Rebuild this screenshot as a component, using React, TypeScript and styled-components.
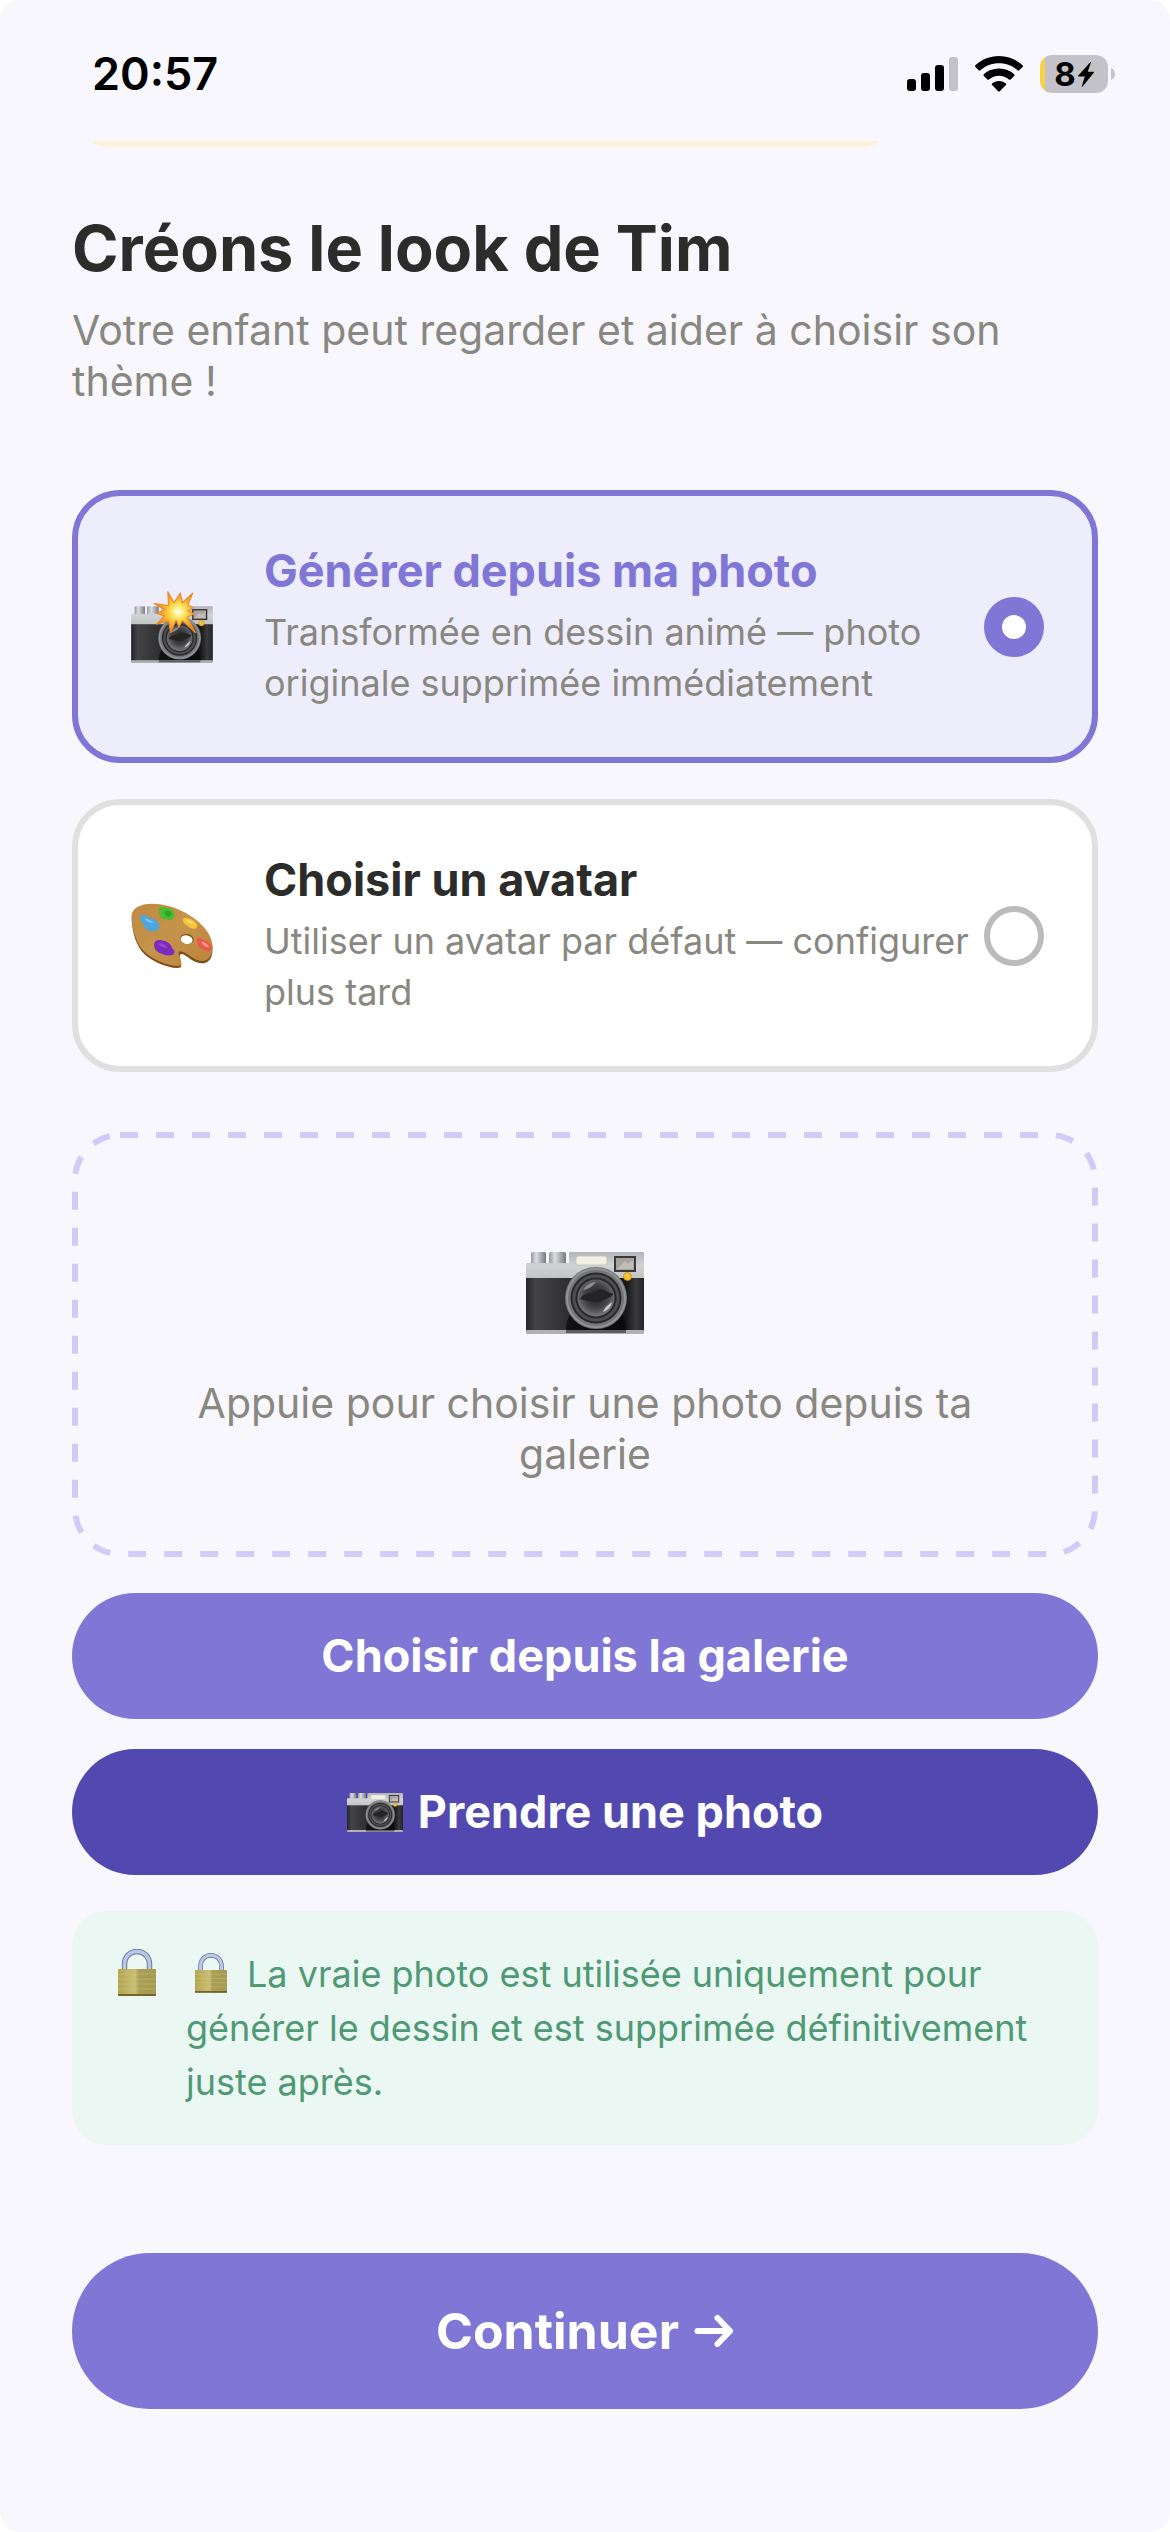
import React, { useId, useState } from "react";
import styled, { createGlobalStyle } from "styled-components";

const color = {
  page: "#f8f7fd",
  ink: "#2c2c2a",
  muted: "#888780",
  primary: "#7f76d6",
  primaryDark: "#5249b0",
  primarySoft: "#eeedfc",
  dash: "#d1ccf7",
  line: "#e0e0e0",
  radio: "#bbbbbb",
  safeBg: "#eaf7f2",
  safeInk: "#4f9974",
};

const GlobalStyle = createGlobalStyle`
  * { box-sizing: border-box; }
  body {
    margin: 0;
    background: #ffffff;
    font-family: Inter, "Liberation Sans", sans-serif;
  }
  button { font-family: inherit; border: 0; cursor: pointer; }
  svg { display: block; }
`;

const Screen = styled.div`
  min-height: 100vh;
  background: ${color.page};
  border-radius: 20px;
  overflow: hidden;
`;

const StatusBar = styled.header`
  display: flex;
  align-items: center;
  justify-content: space-between;
  padding: 50px 55px 43px 92px;
`;

const Clock = styled.time`
  font-size: 45px;
  line-height: 48px;
  font-weight: 600;
  color: #000000;
`;

const StatusIcons = styled.div`
  display: flex;
  align-items: center;
  gap: 17px;
`;

const BatteryWrap = styled.div`
  display: flex;
  align-items: center;
  gap: 3px;
`;

const BatteryBody = styled.div`
  display: flex;
  align-items: center;
  justify-content: center;
  gap: 2px;
  width: 68px;
  height: 38px;
  border-radius: 12px;
  background: linear-gradient(to right, #f8cf46 5px, #c3c2c9 5px);
  font-size: 33px;
  line-height: 38px;
  font-weight: 700;
  color: #000000;
`;

const Content = styled.main`
  display: flex;
  flex-direction: column;
  padding: 0 72px 123px;
`;

const ProgressTrack = styled.div`
  height: 6px;
  max-width: 786px;
  margin: 0 20px 62px;
  border-radius: 0 0 18px 18px / 0 0 6px 6px;
  background: #fef1dc;
`;

const Title = styled.h1`
  margin: 0 0 18px;
  font-size: 63px;
  line-height: 78px;
  font-weight: 700;
  color: ${color.ink};
`;

const Subtitle = styled.p`
  margin: 0 0 83px;
  font-size: 41px;
  line-height: 51px;
  color: ${color.muted};
`;

const Options = styled.div`
  display: flex;
  flex-direction: column;
  gap: 36px;
  margin-bottom: 60px;
`;

const OptionCard = styled.label<{ $selected: boolean }>`
  display: flex;
  align-items: center;
  padding: 48px;
  border: 6px solid ${(p) => (p.$selected ? color.primary : color.line)};
  border-radius: 48px;
  background: ${(p) => (p.$selected ? color.primarySoft : "#ffffff")};
  cursor: pointer;
`;

const OptionIcon = styled.span`
  display: flex;
  flex: none;
  justify-content: center;
  width: 92px;
  margin-right: 46px;
`;

const OptionText = styled.span`
  display: flex;
  flex: 1;
  flex-direction: column;
  gap: 9px;
`;

const OptionTitle = styled.span<{ $selected: boolean }>`
  font-size: 45px;
  line-height: 54px;
  font-weight: 700;
  color: ${(p) => (p.$selected ? color.primary : color.ink)};
`;

const OptionDetail = styled.span`
  font-size: 36px;
  line-height: 51px;
  color: ${color.muted};
`;

const Radio = styled.input`
  appearance: none;
  flex: none;
  width: 60px;
  height: 60px;
  margin: 0;
  border: 6px solid ${color.radio};
  border-radius: 50%;
  background: transparent;

  &:checked {
    border: 18px solid ${color.primary};
    background: #ffffff;
  }
`;

const DropZone = styled.button`
  position: relative;
  display: flex;
  flex-direction: column;
  align-items: center;
  gap: 44px;
  margin-bottom: 36px;
  padding: 120px 84px 77px;
  border-radius: 48px;
  background: transparent;
  font-size: 41px;
  line-height: 51px;
  color: ${color.muted};
`;

const DashedOutline = styled.svg`
  position: absolute;
  inset: 0;
  width: 100%;
  height: 100%;

  rect {
    width: calc(100% - 6px);
    height: calc(100% - 6px);
    fill: none;
    stroke: ${color.dash};
    stroke-width: 6px;
    stroke-dasharray: 18 18;
  }
`;

const Actions = styled.div`
  display: flex;
  flex-direction: column;
  gap: 30px;
  margin-bottom: 36px;
`;

const PillButton = styled.button<{ $dark?: boolean }>`
  display: flex;
  align-items: center;
  justify-content: center;
  gap: 15px;
  padding: 36px;
  border-radius: 63px;
  background: ${(p) => (p.$dark ? color.primaryDark : color.primary)};
  font-size: 45px;
  line-height: 54px;
  font-weight: 700;
  color: #ffffff;
`;

const PrivacyNote = styled.aside`
  display: flex;
  align-items: flex-start;
  gap: 20px;
  margin-bottom: 108px;
  padding: 36px;
  border-radius: 36px;
  background: ${color.safeBg};
`;

const NoteIcon = styled.span`
  display: flex;
  justify-content: center;
  width: 58px;
  padding: 2px 0;
`;

const NoteText = styled.p`
  flex: 1;
  margin: 0;
  font-size: 36px;
  line-height: 54px;
  color: ${color.safeInk};

  svg {
    display: inline-block;
    margin: 0 20px 0 9px;
    vertical-align: -6px;
  }
`;

const ContinueButton = styled(PillButton)`
  padding: 48px;
  border-radius: 78px;
  font-size: 50px;
  line-height: 60px;
`;

function SignalIcon() {
  return (
    <svg width="51" height="34" viewBox="0 0 51 34" aria-hidden="true">
      <rect x="0" y="22" width="9" height="12" rx="3" />
      <rect x="14" y="16" width="9" height="18" rx="3" />
      <rect x="28" y="8" width="9" height="26" rx="3" />
      <rect x="42" y="0" width="9" height="34" rx="3" fill="#c3c2c9" />
    </svg>
  );
}

function WifiIcon() {
  return (
    <svg width="48" height="36" viewBox="0 0 48 36" aria-hidden="true">
      <path d="M24 0C33.300 0 41.500 3.600 47.600 9.300Q48.400 10.100 47.600 10.900L44.200 14.300Q43.400 15 42.600 14.300C37.600 9.800 31.200 7.200 24 7.200S10.400 9.800 5.400 14.300Q4.600 15 3.800 14.300L.4 10.900Q-.4 10.100.4 9.300C6.500 3.600 14.700 0 24 0Z" />
      <path d="M24 12.600C30 12.600 35.200 14.800 39.200 18.300Q40 19.100 39.200 19.900L35.600 23.400Q34.800 24.100 34 23.400C31.300 21.100 27.900 19.700 24 19.700S16.700 21.100 14 23.400Q13.200 24.100 12.400 23.400L8.800 19.900Q8 19.100 8.800 18.300C12.800 14.800 18 12.600 24 12.600Z" />
      <path d="M24 25C26.700 25 29 25.900 30.900 27.400Q31.700 28.200 30.900 29L24.800 35.300Q24 36.100 23.200 35.300L17.100 29Q16.300 28.200 17.100 27.400C19 25.900 21.300 25 24 25Z" />
    </svg>
  );
}

function BatteryIcon() {
  return (
    <BatteryWrap>
      <BatteryBody>
        <span>8</span>
        <svg width="16" height="25" viewBox="0 0 16 25" aria-hidden="true">
          <path d="M12.300.3C12.700-.2 13.100.1 12.900.7L9.700 9.800H15.400C16 9.800 16.100 10.300 15.800 10.800L4.600 24.600C4.200 25.100 3.600 24.800 3.800 24.200L6.800 14.600H.7C.1 14.600-.1 14.100.3 13.600Z" />
        </svg>
      </BatteryBody>
      <svg width="4" height="12" viewBox="0 0 4 12" aria-hidden="true">
        <path d="M0 0C2.500 1 4 3.300 4 6S2.500 11 0 12Z" fill="#c3c2c9" />
      </svg>
    </BatteryWrap>
  );
}

function Camera({ width, flash = false }: { width: number; flash?: boolean }) {
  const id = useId();
  const top = flash ? -22 : 0;
  const height = 82 - top;
  const ref = (name: string) => `url(#${id}${name})`;
  return (
    <svg
      width={width}
      height={Math.round((width * height) / 118)}
      viewBox={`0 ${top} 118 ${height}`}
      aria-hidden="true"
    >
      <defs>
        <linearGradient id={`${id}plate`} x1="0" y1="0" x2="0" y2="1">
          <stop offset="0" stopColor="#b2b4b7" />
          <stop offset="0.500" stopColor="#d0d2d4" />
          <stop offset="1" stopColor="#c0c2c4" />
        </linearGradient>
        <linearGradient id={`${id}knob`}>
          <stop offset="0" stopColor="#97999d" />
          <stop offset="0.350" stopColor="#dddee0" />
          <stop offset="1" stopColor="#77797d" />
        </linearGradient>
        <linearGradient id={`${id}body`}>
          <stop offset="0" stopColor="#242426" />
          <stop offset="0.080" stopColor="#444446" />
          <stop offset="0.400" stopColor="#2b2b2d" />
          <stop offset="0.850" stopColor="#171718" />
          <stop offset="0.930" stopColor="#3a3a3c" />
          <stop offset="1" stopColor="#242425" />
        </linearGradient>
        <radialGradient id={`${id}glass`} cx="0.500" cy="0.450" r="0.600">
          <stop offset="0" stopColor="#1d1c1e" />
          <stop offset="0.550" stopColor="#454448" />
          <stop offset="1" stopColor="#85858c" />
        </radialGradient>
        <radialGradient id={`${id}burst`} gradientUnits="userSpaceOnUse" cx="68" cy="8" r="31">
          <stop offset="0" stopColor="#ffffff" />
          <stop offset="0.150" stopColor="#fff6a8" />
          <stop offset="0.400" stopColor="#ffd94a" />
          <stop offset="0.650" stopColor="#fbb034" />
          <stop offset="1" stopColor="#ec8420" />
        </radialGradient>
      </defs>
      <rect x="5" y="0" width="15" height="13" rx="1.500" fill={ref("knob")} />
      <rect x="23" y="0" width="17" height="13" rx="1.500" fill={ref("knob")} />
      <path d="M0 12Q0 11 1 11H43V1Q43 0 44 0H117Q118 0 118 1V27H0Z" fill={ref("plate")} />
      <rect x="0" y="26" width="118" height="53" fill={ref("body")} />
      <path d="M40 79C40 68 44 60 50 56H92C98 62 100 70 100 79Z" fill="#050505" opacity="0.700" />
      <rect x="0" y="78" width="118" height="4" rx="1" fill="#aeb0b3" />
      <rect x="40" y="78" width="60" height="3" fill="#5d5e61" />
      <rect x="50" y="4" width="31" height="9" rx="2.500" fill="#f3f0e5" stroke="#c1beb5" strokeWidth="0.800" />
      <rect x="89" y="5" width="20" height="14" fill="#a9a39e" stroke="#39393b" strokeWidth="2" />
      <path d="M91 17L99 9L102 12L107 8V17Z" fill="#c2bcb6" />
      <circle cx="70" cy="46" r="31" fill="#747578" />
      <circle cx="70" cy="46" r="29" fill="none" stroke="#929396" strokeWidth="2" />
      <circle cx="70" cy="46" r="25.500" fill="#29292b" />
      <circle cx="70" cy="46" r="22" fill="none" stroke="#4f4f52" strokeWidth="3" />
      <circle cx="70" cy="46" r="18.500" fill={ref("glass")} />
      <path d="M54 47C60 38 66 44 71 39S84 43 87 41C87 46 80 46 76 49S61 49 54 47Z" fill="#242326" />
      <path d="M57 38C60 33 65 30 70 30C67 34 63 37 57 38Z" fill="#a9aab2" opacity="0.700" />
      <path d="M77 60C82 58 85 55 86 50C82 53 79 55 77 60Z" fill="#e6e6eb" opacity="0.800" />
      <circle cx="101.500" cy="24.500" r="4" fill="#f5c431" stroke="#b98a16" strokeWidth="0.700" />
      {flash && (
        <path
          d="M53 -21L62 -5L71 -19L74 -5L89 -19L82 -2L89 2L82 7L91 11L81 16L93 38L74 21L69 30L65 20L57 38L54 21L37 26L48 14L37 10L49 5L33 -4L54 -1Z"
          fill={ref("burst")}
          stroke="#ee8a24"
          strokeWidth="1.600"
          strokeLinejoin="round"
        />
      )}
    </svg>
  );
}

function Palette() {
  const id = useId();
  return (
    <svg width="82" height="66" viewBox="64 75 246 198" aria-hidden="true">
      <defs>
        <linearGradient id={id} x1="0" y1="0" x2="1" y2="1">
          <stop offset="0" stopColor="#c08a42" />
          <stop offset="0.500" stopColor="#c6934b" />
          <stop offset="1" stopColor="#b98239" />
        </linearGradient>
      </defs>
      <path
        fill="#7d4f1d"
        d="M66 125C64 92 100 76 150 82C220 92 298 146 308 204C311 238 300 256 276 256C246 254 232 230 216 228C203 230 218 252 214 268C188 276 134 254 106 230C80 206 68 164 66 125Z"
      />
      <path
        fill={`url(#${id})`}
        d="M66 118C63 88 100 72 150 79C220 88 300 140 308 198C311 230 300 249 276 249C248 247 230 220 212 220C198 224 220 244 214 262C188 270 134 248 106 223C80 200 68 158 66 118Z"
      />
      <ellipse cx="232" cy="183" rx="20" ry="15" fill="#7d4f1d" transform="rotate(12 232 183)" />
      <ellipse cx="231" cy="185" rx="18" ry="13" fill="#ffffff" transform="rotate(12 231 185)" />
      <path fill="#48bd34" d="M148 92C154 84 164 88 172 90C184 90 194 98 194 110C194 124 180 128 168 124C152 122 144 106 148 92Z" />
      <path fill="#2fa323" d="M164 102C170 94 184 98 186 108C184 118 172 118 168 112Z" />
      <path fill="#4ea6dd" d="M94 112C104 106 112 116 122 120C136 122 150 132 149 146C146 158 134 164 122 158C112 158 104 150 102 140C92 132 90 120 94 112Z" />
      <path fill="#7cc3ec" d="M104 122C114 120 124 128 134 134C126 136 114 134 104 122Z" />
      <path fill="#f1c63d" d="M220 122C230 116 242 122 252 128C262 134 266 144 260 150C250 156 240 150 234 144C226 140 218 132 220 122Z" />
      <path fill="#fae27f" d="M230 126C238 124 248 132 252 138C244 138 236 134 230 126Z" />
      <path fill="#7c2bbf" d="M134 194C140 184 154 186 162 188C174 190 186 200 188 212C196 214 196 226 190 230C176 234 162 232 152 226C140 222 130 208 134 194Z" />
      <path fill="#9349d4" d="M146 198C156 192 168 200 174 210C164 210 154 208 146 198Z" />
      <path fill="#ea5a4c" d="M262 182C270 176 280 186 288 188C300 190 306 202 304 214C298 224 286 222 280 214C270 212 260 198 262 182Z" />
      <path fill="#f9a79d" d="M276 192C286 192 294 200 298 208C288 206 280 202 276 192Z" />
    </svg>
  );
}

function Lock({ width }: { width: number }) {
  const id = useId();
  return (
    <svg width={width} height={Math.round((width * 47) / 38)} viewBox="0 0 38 47" aria-hidden="true">
      <defs>
        <linearGradient id={id}>
          <stop offset="0" stopColor="#b3a552" />
          <stop offset="0.450" stopColor="#c9bf74" />
          <stop offset="0.550" stopColor="#a99f55" />
          <stop offset="1" stopColor="#a59a50" />
        </linearGradient>
      </defs>
      <path d="M6.500 23V15.500C6.500 7.500 12 2.500 19 2.500S31.500 7.500 31.500 15.500V23" fill="none" stroke="#74798c" strokeWidth="5.500" />
      <path d="M6.500 23V15.500C6.500 7.500 12 2.500 19 2.500S31.500 7.500 31.500 15.500V23" fill="none" stroke="#b6c8ee" strokeWidth="3.500" />
      <rect x="0" y="20" width="38" height="27" rx="1" fill={`url(#${id})`} />
      <path d="M0 25H38M0 30H38M0 35H38M0 40H38" stroke="#d6cb80" strokeWidth="0.400" />
      <path d="M0 45H38V46Q38 47 37 47H1Q0 47 0 46Z" fill="#74652a" />
    </svg>
  );
}

function ArrowIcon() {
  return (
    <svg width="40" height="34" viewBox="0 0 40 34" aria-hidden="true">
      <path
        d="M3.500 17H35M23.500 4L36 17L23.500 30"
        fill="none"
        stroke="#ffffff"
        strokeWidth="6"
        strokeLinecap="round"
        strokeLinejoin="round"
      />
    </svg>
  );
}

const options = [
  {
    id: "photo",
    title: "Générer depuis ma photo",
    detail: "Transformée en dessin animé — photo originale supprimée immédiatement",
    icon: <Camera width={82} flash />,
  },
  {
    id: "avatar",
    title: "Choisir un avatar",
    detail: "Utiliser un avatar par défaut — configurer plus tard",
    icon: <Palette />,
  },
];

export default function App() {
  const [choice, setChoice] = useState("photo");

  return (
    <Screen>
      <GlobalStyle />
      <StatusBar>
        <Clock>20:57</Clock>
        <StatusIcons>
          <SignalIcon />
          <WifiIcon />
          <BatteryIcon />
        </StatusIcons>
      </StatusBar>
      <Content>
        <ProgressTrack />
        <Title>Créons le look de Tim</Title>
        <Subtitle>Votre enfant peut regarder et aider à choisir son thème !</Subtitle>

        <Options role="radiogroup">
          {options.map((option) => {
            const selected = option.id === choice;
            return (
              <OptionCard key={option.id} htmlFor={option.id} $selected={selected}>
                <OptionIcon>{option.icon}</OptionIcon>
                <OptionText>
                  <OptionTitle $selected={selected}>{option.title}</OptionTitle>
                  <OptionDetail>{option.detail}</OptionDetail>
                </OptionText>
                <Radio
                  type="radio"
                  name="look"
                  id={option.id}
                  checked={selected}
                  onChange={() => setChoice(option.id)}
                />
              </OptionCard>
            );
          })}
        </Options>

        <DropZone type="button">
          <DashedOutline aria-hidden="true">
            <rect x="3" y="3" rx="45" />
          </DashedOutline>
          <Camera width={118} />
          <span>Appuie pour choisir une photo depuis ta galerie</span>
        </DropZone>

        <Actions>
          <PillButton type="button">Choisir depuis la galerie</PillButton>
          <PillButton type="button" $dark>
            <Camera width={56} />
            Prendre une photo
          </PillButton>
        </Actions>

        <PrivacyNote>
          <NoteIcon>
            <Lock width={38} />
          </NoteIcon>
          <NoteText>
            <Lock width={32} />
            La vraie photo est utilisée uniquement pour générer le dessin et est supprimée
            définitivement juste après.
          </NoteText>
        </PrivacyNote>

        <ContinueButton type="button">
          Continuer
          <ArrowIcon />
        </ContinueButton>
      </Content>
    </Screen>
  );
}
